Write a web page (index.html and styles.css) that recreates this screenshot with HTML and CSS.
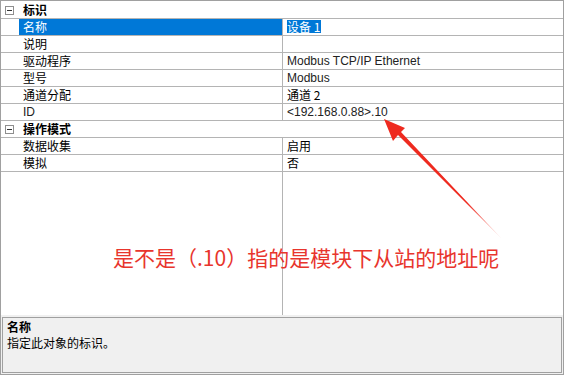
FILE: index.html
```html
<!DOCTYPE html>
<html lang="zh-CN">
<head>
  <meta charset="UTF-8">
  <title>属性</title>
  <link rel="stylesheet" href="styles.css">
</head>
<body>
<div class="frame">
  <div class="grid">
    <div class="row category">
      <div class="gutter"><span class="toggle"></span></div>
      <div class="cat-name">标识</div>
    </div>
    <div class="row selected">
      <div class="gutter"></div>
      <div class="name">名称</div>
      <div class="value"><span class="edit">设备 1</span></div>
    </div>
    <div class="row">
      <div class="gutter"></div>
      <div class="name">说明</div>
      <div class="value"></div>
    </div>
    <div class="row">
      <div class="gutter"></div>
      <div class="name">驱动程序</div>
      <div class="value latin">Modbus TCP/IP Ethernet</div>
    </div>
    <div class="row">
      <div class="gutter"></div>
      <div class="name">型号</div>
      <div class="value latin">Modbus</div>
    </div>
    <div class="row">
      <div class="gutter"></div>
      <div class="name">通道分配</div>
      <div class="value">通道 2</div>
    </div>
    <div class="row">
      <div class="gutter"></div>
      <div class="name latin">ID</div>
      <div class="value latin">&lt;192.168.0.88&gt;.10</div>
    </div>
    <div class="row category">
      <div class="gutter"><span class="toggle"></span></div>
      <div class="cat-name">操作模式</div>
    </div>
    <div class="row">
      <div class="gutter"></div>
      <div class="name">数据收集</div>
      <div class="value">启用</div>
    </div>
    <div class="row">
      <div class="gutter"></div>
      <div class="name">模拟</div>
      <div class="value">否</div>
    </div>
    <div class="filler">
      <div class="filler-left"></div>
      <div class="filler-right"></div>
    </div>

    <!-- annotation drawn over the grid -->
    <svg class="arrow" width="564" height="314" viewBox="0 0 564 314">
      <defs>
        <linearGradient id="fade" x1="384" y1="118" x2="502" y2="238" gradientUnits="userSpaceOnUse">
          <stop offset="0" stop-color="#ee2a1f"/>
          <stop offset="0.7" stop-color="#ee2a1f"/>
          <stop offset="1" stop-color="#ee2a1f" stop-opacity="0.15"/>
        </linearGradient>
      </defs>
      <polygon fill="url(#fade)" points="384,118 405,127 401,131 502,238 398,134 393,140"/>
    </svg>
    <div class="note">是不是（.10）指的是模块下从站的地址呢</div>
  </div>
  <div class="help">
    <div class="help-title">名称</div>
    <div class="help-text">指定此对象的标识。</div>
  </div>
</div>
</body>
</html>
```

FILE: styles.css
```css
html, body {
  margin: 0;
  padding: 0;
}
body {
  font-family: "Noto Sans CJK SC", "Liberation Sans", sans-serif;
  font-size: 12px;
  color: #000;
  background: #fff;
}
.frame {
  width: 564px;
  height: 375px;
  box-sizing: border-box;
  border: 1px solid #a0a0a0;
  background: #f0f0f0;
  display: flex;
  flex-direction: column;
}
.grid {
  position: relative;
  height: 314px;
  background: #fff;
  padding-top: 1px;
  box-sizing: border-box;
  display: flex;
  flex-direction: column;
}
.row {
  display: grid;
  grid-template-columns: 18px 263px 1fr;
  height: 17px;
  box-sizing: border-box;
  border-bottom: 1px solid #b4b4b4;
  line-height: 16px;
}
.row.category {
  grid-template-columns: 18px 1fr;
}
.gutter {
  display: flex;
  align-items: center;
  padding-left: 4px;
}
.toggle {
  position: relative;
  width: 9px;
  height: 9px;
  box-sizing: border-box;
  border: 1px solid #8e8e8e;
  background: #fff;
}
.toggle::after {
  content: "";
  position: absolute;
  left: 1px;
  top: 3px;
  width: 5px;
  height: 1px;
  background: #333;
}
.cat-name {
  font-weight: bold;
  padding-left: 4px;
}
.name {
  padding-left: 4px;
  white-space: nowrap;
}
.value {
  border-left: 1px solid #b4b4b4;
  padding-left: 4px;
  white-space: nowrap;
}
.latin {
  font-family: "Liberation Sans", "Noto Sans CJK SC", sans-serif;
  color: #222;
}
.selected .name {
  background: #0078d7;
  color: #fff;
}
.edit {
  background: #0078d7;
  color: #fff;
  padding: 0 1px 0 0;
  line-height: 13px;
  display: inline-block;
}
.filler {
  flex: 1;
  display: grid;
  grid-template-columns: 281px 1fr;
}
.filler-right {
  border-left: 1px solid #b4b4b4;
}
.arrow {
  position: absolute;
  left: -1px;
  top: 0;
}
.note {
  position: absolute;
  left: 112px;
  top: 241px;
  font-size: 21px;
  line-height: 30px;
  color: #e8352d;
  white-space: nowrap;
}
.help {
  margin: 2px 1px 1px 1px;
  flex: 1;
  border: 1px solid #a0a0a0;
  background: #f0f0f0;
  padding: 1px 4px 0;
  line-height: 16px;
}
.help-title {
  font-weight: bold;
}
```
